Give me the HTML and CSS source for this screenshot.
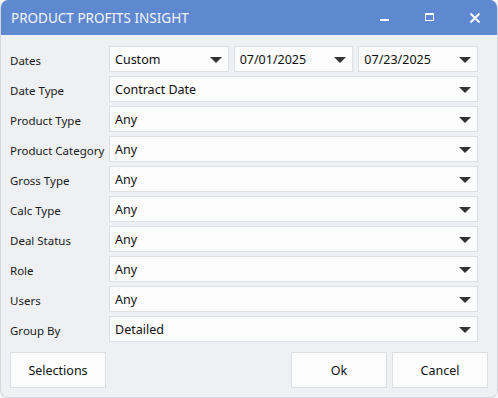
FILE: index.html
```html
<!DOCTYPE html>
<html>
<head>
<meta charset="utf-8">
<link rel="stylesheet" href="styles.css">
</head>
<body>
<div class="window">
  <div class="titlebar">
    <span class="title">PRODUCT PROFITS INSIGHT</span>
    <div class="controls">
      <svg class="ctl" width="12" height="12" viewBox="0 0 12 12"><rect x="1" y="7" width="9" height="2" fill="#fff"/></svg>
      <svg class="ctl" width="12" height="12" viewBox="0 0 12 12"><rect x="1.5" y="1.5" width="8" height="7" fill="none" stroke="#fff" stroke-width="1"/><rect x="1" y="1" width="9" height="2" fill="#fff"/></svg>
      <svg class="ctl" width="12" height="12" viewBox="0 0 12 12"><path d="M1.5 1.5 L10.5 10.5 M10.5 1.5 L1.5 10.5" stroke="#fff" stroke-width="2"/></svg>
    </div>
  </div>
  <div class="content">
    <div class="rows">
      <div class="row">
        <span class="label">Dates</span>
        <div class="controls-3">
          <div class="select"><span>Custom</span><i class="arrow"></i></div>
          <div class="select"><span>07/01/2025</span><i class="arrow"></i></div>
          <div class="select"><span>07/23/2025</span><i class="arrow"></i></div>
        </div>
      </div>
      <div class="row"><span class="label">Date Type</span><div class="select"><span>Contract Date</span><i class="arrow"></i></div></div>
      <div class="row"><span class="label">Product Type</span><div class="select"><span>Any</span><i class="arrow"></i></div></div>
      <div class="row"><span class="label">Product Category</span><div class="select"><span>Any</span><i class="arrow"></i></div></div>
      <div class="row"><span class="label">Gross Type</span><div class="select"><span>Any</span><i class="arrow"></i></div></div>
      <div class="row"><span class="label">Calc Type</span><div class="select"><span>Any</span><i class="arrow"></i></div></div>
      <div class="row"><span class="label">Deal Status</span><div class="select"><span>Any</span><i class="arrow"></i></div></div>
      <div class="row"><span class="label">Role</span><div class="select"><span>Any</span><i class="arrow"></i></div></div>
      <div class="row"><span class="label">Users</span><div class="select"><span>Any</span><i class="arrow"></i></div></div>
      <div class="row"><span class="label">Group By</span><div class="select"><span>Detailed</span><i class="arrow"></i></div></div>
    </div>
    <div class="buttons">
      <button class="btn">Selections</button>
      <div class="right-btns">
        <button class="btn">Ok</button>
        <button class="btn">Cancel</button>
      </div>
    </div>
  </div>
</div>
</body>
</html>
```
FILE: styles.css
```css
* { box-sizing: border-box; }
html, body {
  margin: 0;
  padding: 0;
  background: #f4f4f6;
  font-family: "Noto Sans", "Open Sans", sans-serif;
}
.window {
  width: 498px;
  height: 398px;
  border-radius: 8px;
  overflow: hidden;
  background: #eff0f4;
  border: 1px solid #d4d7dd;
  border-top: none;
  display: flex;
  flex-direction: column;
}
.titlebar {
  height: 35px;
  background: #5e88d0;
  display: flex;
  align-items: center;
  justify-content: space-between;
  padding: 0 17px 0 11px;
  margin: 0 -1px;
}
.title {
  color: #f4f6fb;
  font-size: 13.5px;
  letter-spacing: 0;
}
.controls {
  display: flex;
  gap: 33px;
  align-items: center;
}
.ctl { display: block; }
.content {
  flex: 1;
  display: flex;
  flex-direction: column;
  padding: 11px 9px 9px 9px;
}
.rows {
  display: flex;
  flex-direction: column;
  gap: 4px;
  padding-right: 10px;
}
.row {
  display: flex;
  align-items: center;
  height: 26px;
}
.label {
  width: 99px;
  flex: none;
  font-size: 11.5px;
  color: #1a1a1a;
  padding-top: 2px;
}
.controls-3 {
  flex: 1;
  display: flex;
  gap: 5px;
  height: 100%;
}
.select {
  flex: 1;
  height: 100%;
  background: #fcfcfc;
  border: 1px solid #dcdfe4;
  display: flex;
  align-items: center;
  justify-content: space-between;
  padding: 0 6px 0 5px;
  font-size: 12.5px;
  color: #111;
}
.arrow {
  width: 0;
  height: 0;
  border-left: 6px solid transparent;
  border-right: 6px solid transparent;
  border-top: 6px solid #333;
  margin-top: 1px;
}
.buttons {
  display: flex;
  justify-content: space-between;
  margin-top: 10px;
}
.right-btns {
  display: flex;
  gap: 5px;
}
.btn {
  width: 96px;
  height: 36px;
  background: #fcfcfc;
  border: 1px solid #dcdfe4;
  font-family: inherit;
  font-size: 12.5px;
  color: #111;
  padding: 0;
}
```
